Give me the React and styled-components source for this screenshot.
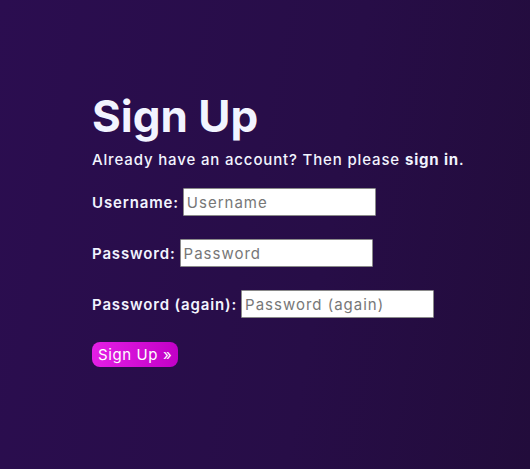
import React from "react";
import styled, { createGlobalStyle } from "styled-components";

const Global = createGlobalStyle`
  html, body { margin: 0; padding: 0; }
  body {
    font-family: Inter, "Open Sans", sans-serif;
    color: #f2f4ff;
  }
`;

const Page = styled.main`
  box-sizing: border-box;
  min-height: 100vh;
  width: 100%;
  padding: 88px 0 0 92px;
  background: linear-gradient(100deg, #2b0d50 0%, #270d47 60%, #220c3b 100%);
`;

const Title = styled.h1`
  margin: 0;
  font-size: 44px;
  line-height: 56px;
  font-weight: 700;
  color: #f2f4ff;
`;

const Lead = styled.p`
  margin: 6px 0 18px;
  font-size: 15px;
  line-height: 20px;
  font-weight: 500;
  letter-spacing: 0.85px;
  b { font-weight: 700; }
`;

const Form = styled.form`
  display: flex;
  flex-direction: column;
  align-items: flex-start;
  gap: 23px;
`;

const Row = styled.div`
  display: flex;
  align-items: center;
  gap: 4px;
  height: 28px;
`;

const Label = styled.label`
  font-size: 15px;
  font-weight: 600;
  letter-spacing: 0.85px;
`;

const Input = styled.input`
  box-sizing: border-box;
  width: 193px;
  height: 28px;
  padding: 0 3px;
  border: 1px solid #8a8a8a;
  border-radius: 1px;
  background: #fff;
  font-family: inherit;
  font-size: 15px;
  letter-spacing: 1px;
  color: #222;
  &::placeholder { color: #777; }
`;

const Button = styled.button`
  height: 25px;
  margin-top: 1px;
  padding: 0 6px;
  border: none;
  border-radius: 8px;
  background: linear-gradient(to right, #e41fe6, #c100c6);
  color: #fff;
  font-family: inherit;
  font-size: 15px;
  letter-spacing: 0.6px;
  cursor: pointer;
`;

export default function App() {
  return (
    <>
      <Global />
      <Page>
        <Title>Sign Up</Title>
        <Lead>
          Already have an account? Then please <b>sign in</b>.
        </Lead>
        <Form onSubmit={(e) => e.preventDefault()}>
          <Row>
            <Label htmlFor="u">Username:</Label>
            <Input id="u" placeholder="Username" />
          </Row>
          <Row>
            <Label htmlFor="p1">Password:</Label>
            <Input id="p1" type="password" placeholder="Password" />
          </Row>
          <Row>
            <Label htmlFor="p2">Password (again):</Label>
            <Input id="p2" type="password" placeholder="Password (again)" />
          </Row>
          <Button type="submit">Sign Up »</Button>
        </Form>
      </Page>
    </>
  );
}
